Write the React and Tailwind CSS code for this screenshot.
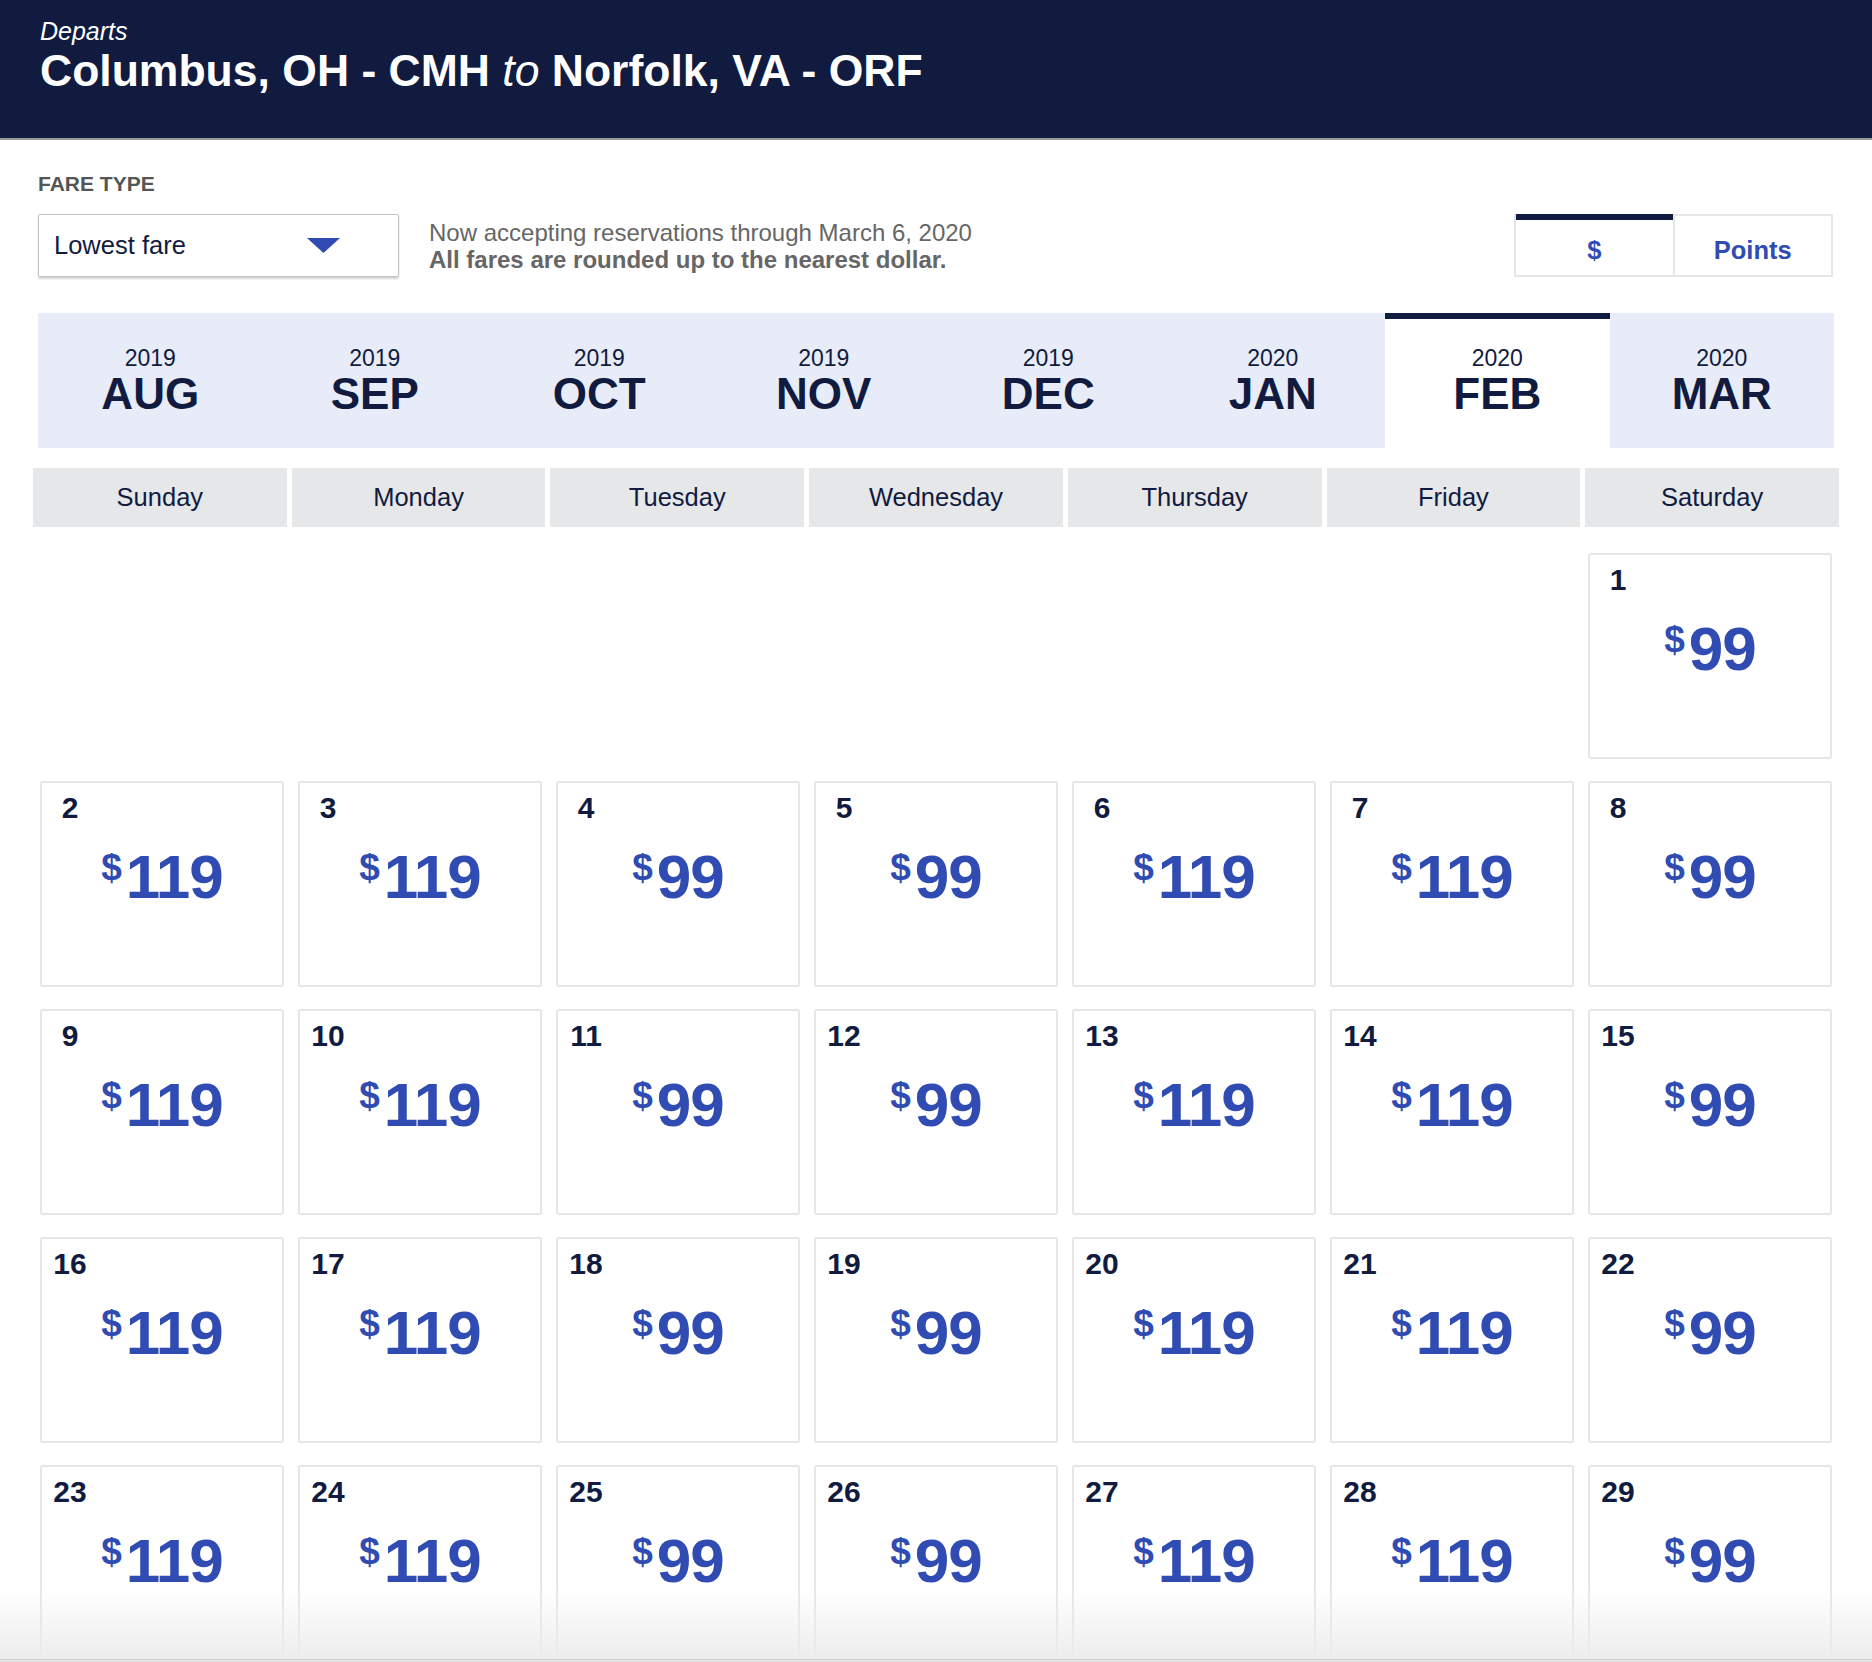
import React from "react";

const months = [
  { y: "2019", m: "AUG" },
  { y: "2019", m: "SEP" },
  { y: "2019", m: "OCT" },
  { y: "2019", m: "NOV" },
  { y: "2019", m: "DEC" },
  { y: "2020", m: "JAN" },
  { y: "2020", m: "FEB", active: true },
  { y: "2020", m: "MAR" },
];

const weekdays = ["Sunday", "Monday", "Tuesday", "Wednesday", "Thursday", "Friday", "Saturday"];
const priceByDow = [119, 119, 99, 99, 119, 119, 99];

function DayCell({ day, price }) {
  return (
    <div className="h-[206px] rounded-[3px] border-2 border-[#e6e6e6] bg-white pt-[10px]">
      <div className="ml-[6px] w-[44px] text-center text-[30px] font-bold leading-[30px] text-[#111b40]">
        {day}
      </div>
      <div className="mt-[23px] flex items-start justify-center text-[#304cb2] font-bold">
        <span className="mt-[3px] mr-[4px] text-[37px] leading-none">$</span>
        <span className="text-[62px] leading-none tracking-[-1px]">{price}</span>
      </div>
    </div>
  );
}

export default function App() {
  // Feb 2020 starts on Saturday
  const cells = [];
  for (let i = 0; i < 6; i++) cells.push(null);
  for (let d = 1; d <= 29; d++) cells.push(d);

  return (
    <div
      className="relative h-[1662px] overflow-hidden bg-white"
      style={{ fontFamily: '"Liberation Sans", Arial, Helvetica, sans-serif' }}
    >
      {/* Header */}
      <div className="h-[140px] border-b-2 border-[#9a9a9a] bg-[#111b40] px-[40px] pt-[16px] text-white">
        <div className="text-[25px] italic leading-[30px]">Departs</div>
        <div className="text-[44.5px] font-bold leading-[50px]">
          Columbus, OH - CMH <span className="font-normal italic">to</span> Norfolk, VA - ORF
        </div>
      </div>

      <div className="px-[38px]">
        {/* Fare type */}
        <div className="pt-[32px] text-[21px] font-bold leading-[24px] text-[#555555]">FARE TYPE</div>
        <div className="mt-[18px] flex items-center">
          <div className="flex h-[63px] w-[361px] items-center justify-between rounded-[2px] border border-[#c4c4c4] pl-[15px] pr-[58px] shadow-[0_2px_2px_rgba(0,0,0,0.18)]">
            <span className="text-[25.5px] leading-none text-[#111b40]">Lowest fare</span>
            <svg width="33" height="15" viewBox="0 0 33 15">
              <polygon points="0,0 33,0 16.5,15" fill="#304cb2" />
            </svg>
          </div>
          <div className="ml-[30px] text-[24px] leading-[27px] text-[#666666]">
            <div>Now accepting reservations through March 6, 2020</div>
            <div className="font-bold">All fares are rounded up to the nearest dollar.</div>
          </div>
          <div className="ml-auto mr-[1px] flex h-[63px] w-[319px] border-2 border-[#e6e6e6]">
            <div className="flex flex-1 flex-col border-r-2 border-[#e6e6e6]">
              <div className="mt-[-2px] h-[6px] bg-[#111b40]" />
              <div className="flex flex-1 items-center justify-center pt-[6px] text-[25.5px] font-bold text-[#304cb2]">$</div>
            </div>
            <div className="flex flex-1 items-center justify-center pt-[10px] text-[25.5px] font-bold text-[#304cb2]">
              Points
            </div>
          </div>
        </div>

        {/* Month tabs */}
        <div className="mt-[36px] flex h-[135px] bg-[#e8ecf8]">
          {months.map((mo) => (
            <div
              key={mo.m}
              className={
                mo.active
                  ? "flex flex-1 flex-col items-center border-t-[6px] border-[#111b40] bg-white pt-[26px] text-[#111b40]"
                  : "flex flex-1 flex-col items-center pt-[32px] text-[#111b40]"
              }
            >
              <div className="text-[23px] leading-[26px]">{mo.y}</div>
              <div className="text-[44px] font-bold leading-[46px]">{mo.m}</div>
            </div>
          ))}
        </div>

        {/* Weekday headers */}
        <div className="mx-[-5px] mt-[20px] grid grid-cols-7 gap-[5px]">
          {weekdays.map((w) => (
            <div
              key={w}
              className="flex h-[59px] items-center justify-center bg-[#e6e7e8] text-[25.5px] text-[#111b40]"
            >
              {w}
            </div>
          ))}
        </div>

        {/* Calendar */}
        <div className="mt-[26px] grid grid-cols-7 gap-x-[14px] gap-y-[22px] px-[2px]">
          {cells.map((d, i) =>
            d === null ? (
              <div key={"e" + i} className="h-[206px]" />
            ) : (
              <DayCell key={d} day={d} price={priceByDow[i % 7]} />
            )
          )}
        </div>
      </div>

      {/* bottom fade */}
      <div className="pointer-events-none absolute bottom-0 left-0 right-0 h-[75px] bg-gradient-to-b from-[rgba(255,255,255,0)] to-[#ececec]" />
      <div className="absolute bottom-0 left-0 right-0 h-[3px] border-t border-[#cfcfcf] bg-[#e4e4e4]" />
    </div>
  );
}
